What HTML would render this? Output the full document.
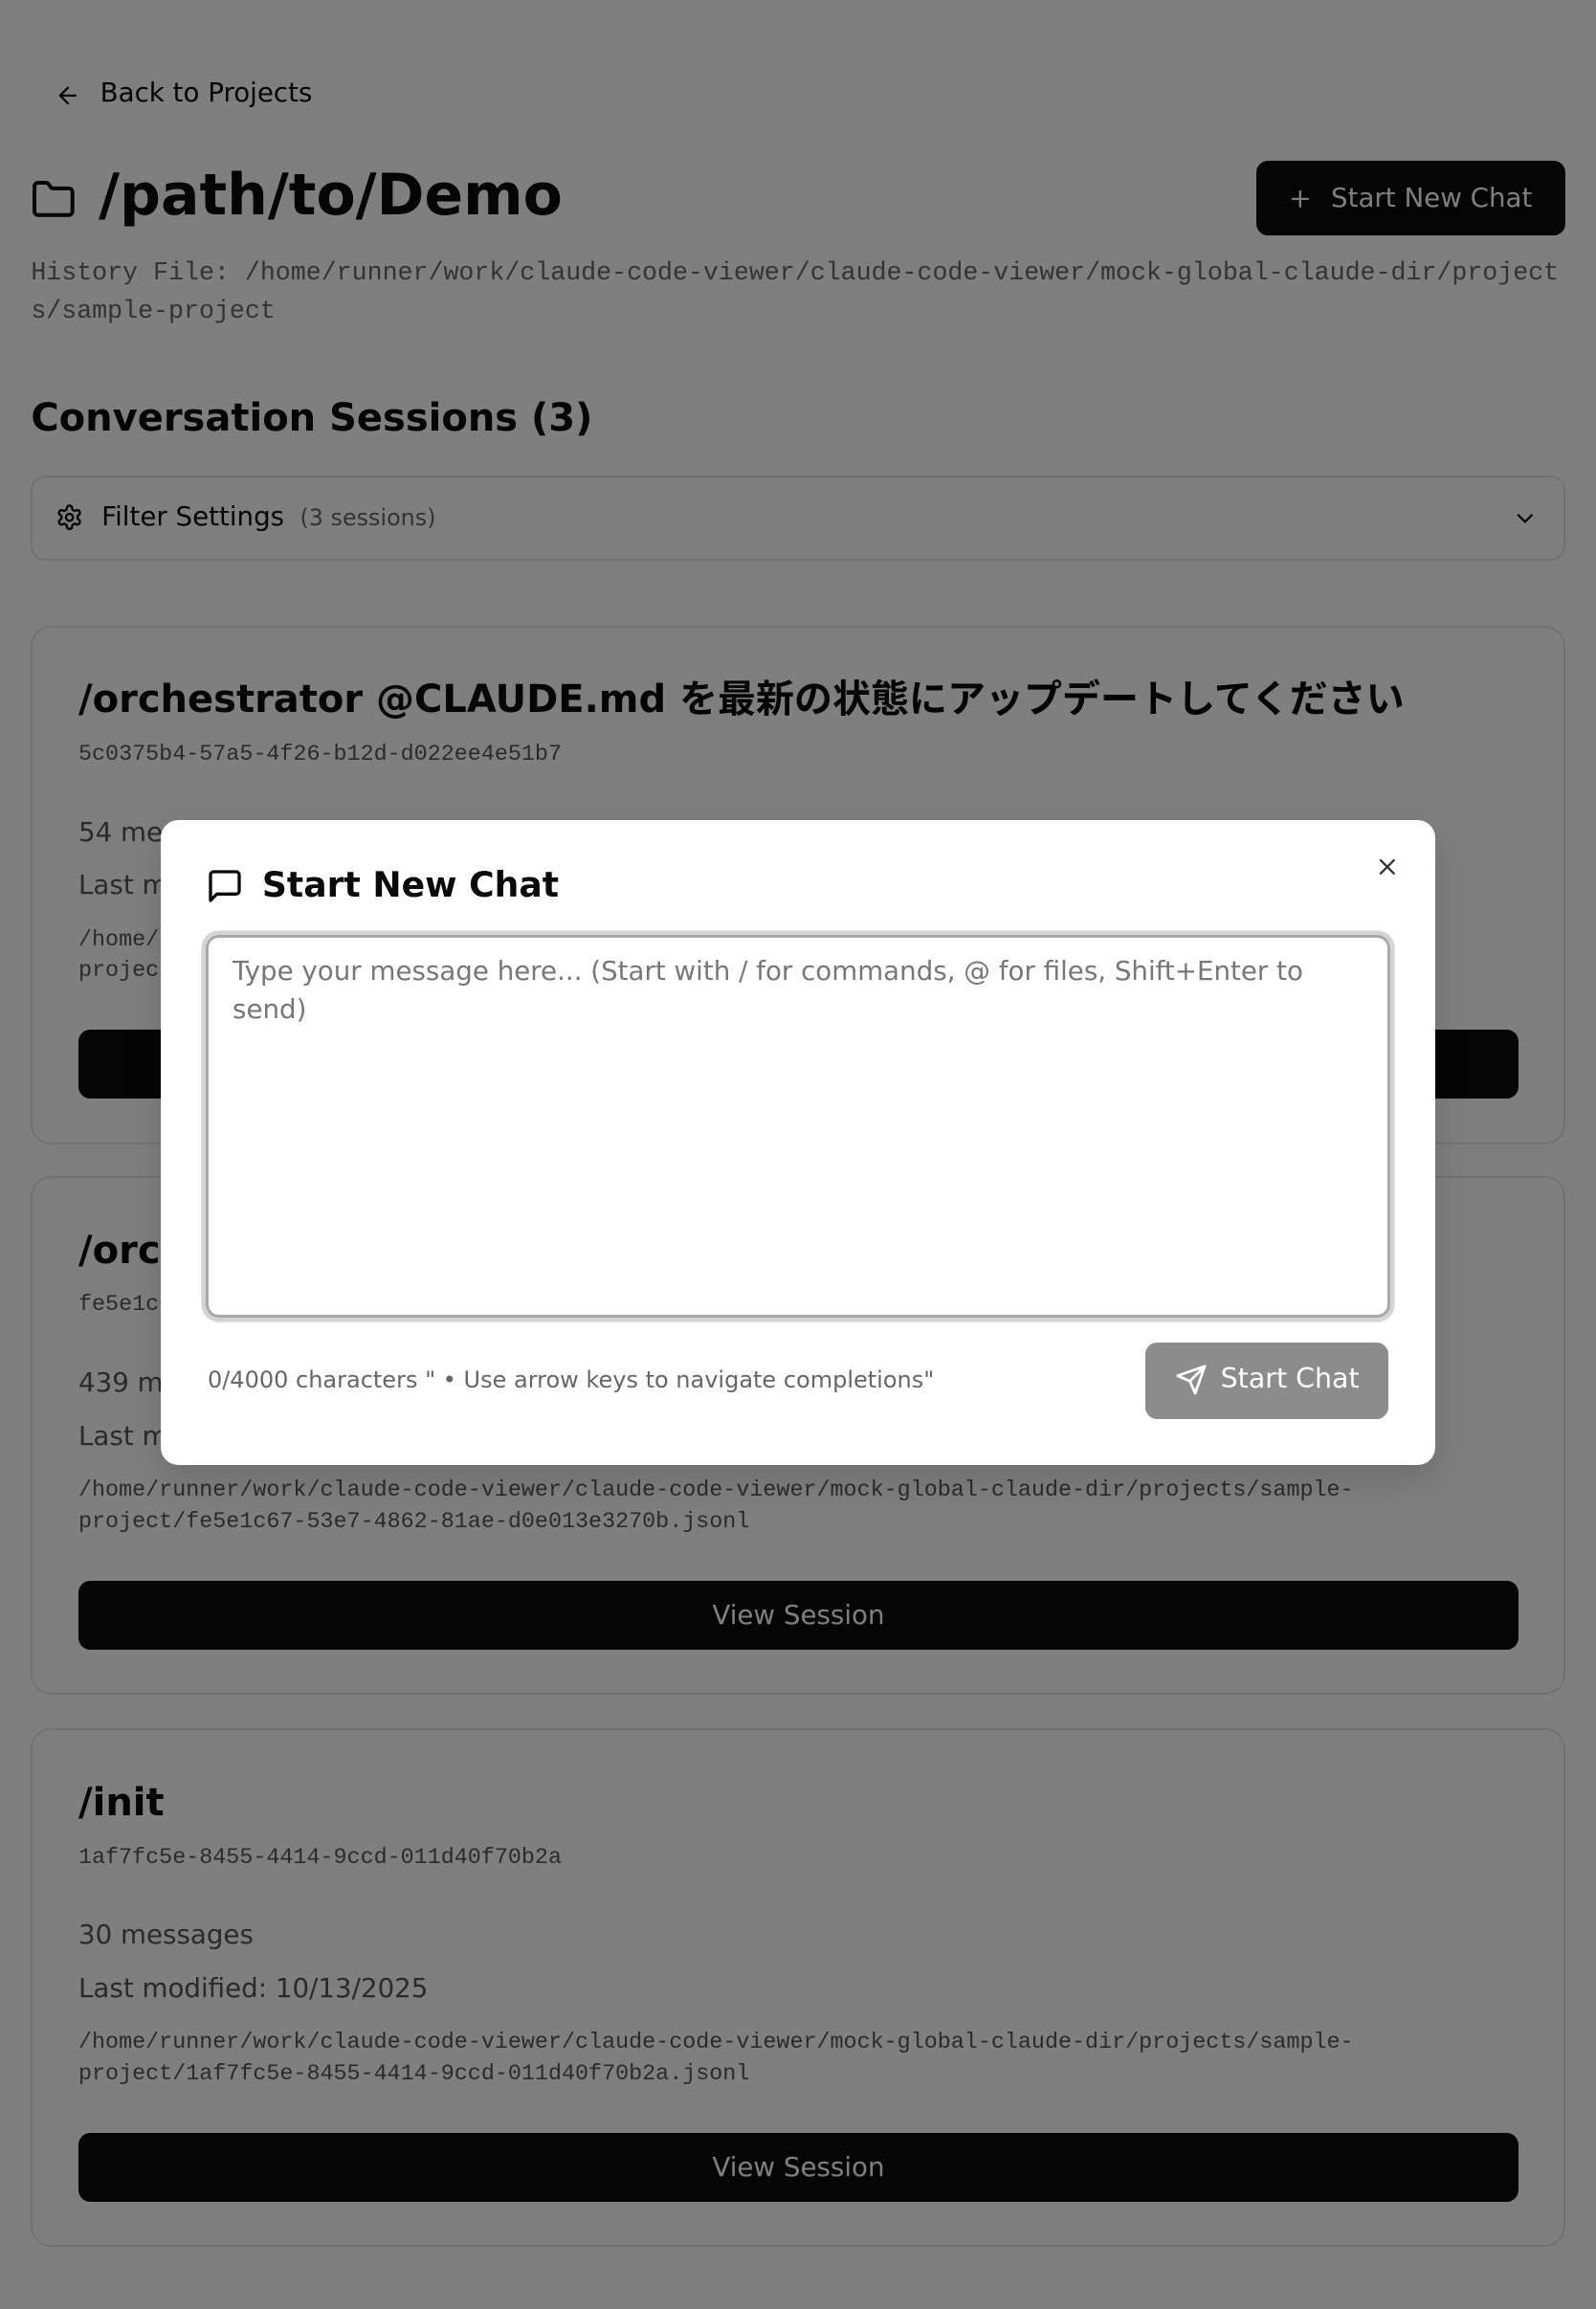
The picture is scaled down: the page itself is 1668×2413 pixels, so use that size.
<!DOCTYPE html>
<html><head><meta charset="utf-8">
<style>
*{box-sizing:border-box;margin:0;padding:0}
html,body{width:1084px;height:1568px;overflow:hidden}
html{zoom:1.53875}
body{background:#fff;font-family:"DejaVu Sans","Liberation Sans","Noto Sans CJK JP",sans-serif;color:#0a0a0a;position:relative}
.mono{font-family:"Liberation Mono","DejaVu Sans Mono",monospace}
.abs{position:absolute}
.card{position:absolute;left:21px;width:1042px;height:352px;border:1.5px solid #e2e2e2;border-radius:14px;background:#fff}
.card h2{position:absolute;left:31px;top:32px;font-size:26px;line-height:34px;height:34px;font-weight:bold;white-space:nowrap;font-family:"DejaVu Sans","Noto Sans CJK JP",sans-serif}
.card .id{position:absolute;left:31px;top:78px;font-size:15.2px;color:#555}
.card .m{position:absolute;left:31px;font-size:18px;color:#555}
.card .p{position:absolute;left:31px;top:202px;font-size:15.2px;color:#555;line-height:21px;width:980px}
.card .b{position:absolute;left:31px;top:273px;width:978px;height:47px;background:#0a0a0a;border-radius:8px;color:#fff;font-size:18px;text-align:center;line-height:47px}
.ov{position:absolute;left:0;top:0;width:1084px;height:1568px;background:rgba(0,0,0,.5)}
</style></head><body>
<svg class="abs" style="left:37px;top:56px" width="18" height="18" viewBox="0 0 24 24" fill="none" stroke="#0a0a0a" stroke-width="2" stroke-linecap="round" stroke-linejoin="round"><path d="M12 19l-7-7 7-7M19 12H5"/></svg>
<div class="abs" style="left:68px;top:52px;font-size:18px">Back to Projects</div>
<svg class="abs" style="left:21px;top:120px" width="31" height="31" viewBox="0 0 24 24" fill="none" stroke="#0a0a0a" stroke-width="2" stroke-linecap="round" stroke-linejoin="round"><path d="M20 20a2 2 0 0 0 2-2V8a2 2 0 0 0-2-2h-7.9a2 2 0 0 1-1.69-.9L9.6 3.9A2 2 0 0 0 7.93 3H4a2 2 0 0 0-2 2v13a2 2 0 0 0 2 2Z"/></svg>
<div class="abs" style="left:67px;top:110px;font-size:39px;font-weight:bold">/path/to/Demo</div>
<div class="abs" style="left:853px;top:109px;width:210px;height:51px;background:#0a0a0a;border-radius:8px;color:#fff;font-size:18px;line-height:51px;padding-left:51px">Start New Chat</div>
<svg class="abs" style="left:874px;top:126px" width="18" height="18" viewBox="0 0 24 24" fill="none" stroke="#fff" stroke-width="2" stroke-linecap="round"><path d="M12 5v14M5 12h14"/></svg>
<div class="abs mono" style="left:21px;top:172px;font-size:17.3px;line-height:26px;color:#666;width:1050px;word-break:break-all">History File: /home/runner/work/claude-code-viewer/claude-code-viewer/mock-global-claude-dir/projects/sample-project</div>
<div class="abs" style="left:21px;top:269px;font-size:26px;font-weight:bold">Conversation Sessions (3)</div>
<div class="abs" style="left:21px;top:323px;width:1042px;height:58px;border:1.5px solid #e2e2e2;border-radius:10px"></div>
<svg class="abs" style="left:38px;top:342px" width="19" height="19" viewBox="0 0 24 24" fill="none" stroke="#0a0a0a" stroke-width="2" stroke-linecap="round" stroke-linejoin="round"><path d="M12.22 2h-.44a2 2 0 0 0-2 2v.18a2 2 0 0 1-1 1.73l-.43.25a2 2 0 0 1-2 0l-.15-.08a2 2 0 0 0-2.73.73l-.22.38a2 2 0 0 0 .73 2.73l.15.1a2 2 0 0 1 1 1.72v.51a2 2 0 0 1-1 1.74l-.15.09a2 2 0 0 0-.73 2.73l.22.38a2 2 0 0 0 2.73.73l.15-.08a2 2 0 0 1 2 0l.43.25a2 2 0 0 1 1 1.73V20a2 2 0 0 0 2 2h.44a2 2 0 0 0 2-2v-.18a2 2 0 0 1 1-1.73l.43-.25a2 2 0 0 1 2 0l.15.08a2 2 0 0 0 2.73-.73l.22-.39a2 2 0 0 0-.73-2.73l-.15-.08a2 2 0 0 1-1-1.74v-.5a2 2 0 0 1 1-1.74l.15-.09a2 2 0 0 0 .73-2.73l-.22-.38a2 2 0 0 0-2.73-.73l-.15.08a2 2 0 0 1-2 0l-.43-.25a2 2 0 0 1-1-1.73V4a2 2 0 0 0-2-2z"/><circle cx="12" cy="12" r="3"/></svg>
<div class="abs" style="left:69px;top:340px;font-size:18px">Filter Settings <span style="font-size:15.5px;color:#666">&nbsp;(3 sessions)</span></div>
<svg class="abs" style="left:1027px;top:343px" width="18" height="18" viewBox="0 0 24 24" fill="none" stroke="#0a0a0a" stroke-width="2" stroke-linecap="round"><path d="M6 9l6 6 6-6"/></svg>

<div class="card" style="top:425px"><h2>/orchestrator @CLAUDE.md を最新の状態にアップデートしてください</h2><div class="id mono">5c0375b4-57a5-4f26-b12d-d022ee4e51b7</div><div class="m" style="top:128px">54 messages</div><div class="m" style="top:164px">Last modified: 10/13/2025</div><div class="p mono">/home/runner/work/claude-code-viewer/claude-code-viewer/mock-global-claude-dir/projects/sample-<br>project/5c0375b4-57a5-4f26-b12d-d022ee4e51b7.jsonl</div><div class="b">View Session</div></div>
<div class="card" style="top:799px"><h2>/orchestrator</h2><div class="id mono">fe5e1c67-53e7-4862-81ae-d0e013e3270b</div><div class="m" style="top:128px">439 messages</div><div class="m" style="top:164px">Last modified: 10/13/2025</div><div class="p mono">/home/runner/work/claude-code-viewer/claude-code-viewer/mock-global-claude-dir/projects/sample-<br>project/fe5e1c67-53e7-4862-81ae-d0e013e3270b.jsonl</div><div class="b">View Session</div></div>
<div class="card" style="top:1174px"><h2>/init</h2><div class="id mono">1af7fc5e-8455-4414-9ccd-011d40f70b2a</div><div class="m" style="top:128px">30 messages</div><div class="m" style="top:164px">Last modified: 10/13/2025</div><div class="p mono">/home/runner/work/claude-code-viewer/claude-code-viewer/mock-global-claude-dir/projects/sample-<br>project/1af7fc5e-8455-4414-9ccd-011d40f70b2a.jsonl</div><div class="b">View Session</div></div>

<div class="ov"></div>

<div class="abs" style="left:109px;top:557px;width:866px;height:438px;background:#fff;border-radius:12px;box-shadow:0 10px 25px rgba(0,0,0,.15)">
<svg class="abs" style="left:31px;top:32px" width="26" height="26" viewBox="0 0 24 24" fill="none" stroke="#0a0a0a" stroke-width="2" stroke-linecap="round" stroke-linejoin="round"><path d="M21 15a2 2 0 0 1-2 2H7l-4 4V5a2 2 0 0 1 2-2h14a2 2 0 0 1 2 2z"/></svg>
<div class="abs" style="left:69px;top:30px;font-size:23.5px;font-weight:bold">Start New Chat</div>
<svg class="abs" style="left:824px;top:23px" width="18" height="18" viewBox="0 0 24 24" fill="none" stroke="#333" stroke-width="2" stroke-linecap="round"><path d="M18 6L6 18M6 6l12 12"/></svg>
<div class="abs" style="left:31px;top:78px;width:804px;height:260px;border:2px solid #a8a8a8;border-radius:9px;box-shadow:0 0 0 3px #d4d4d4;padding:10px 16px;font-size:18px;line-height:26px;color:#777">Type your message here... (Start with / for commands, @ for files, Shift+Enter to send)</div>
<div class="abs" style="left:32px;top:371px;font-size:15.6px;color:#666">0/4000 characters " • Use arrow keys to navigate completions"</div>
<div class="abs" style="left:669px;top:355px;width:165px;height:52px;background:#8c8c8c;border-radius:8px;color:#fff;font-size:18.5px;line-height:50px;padding-left:51px">Start Chat</div>
<svg class="abs" style="left:689px;top:369px" width="22" height="22" viewBox="0 0 24 24" fill="none" stroke="#fff" stroke-width="2" stroke-linecap="round" stroke-linejoin="round"><path d="M22 2L11 13M22 2l-7 20-4-9-9-4z"/></svg>
</div>
</body></html>
